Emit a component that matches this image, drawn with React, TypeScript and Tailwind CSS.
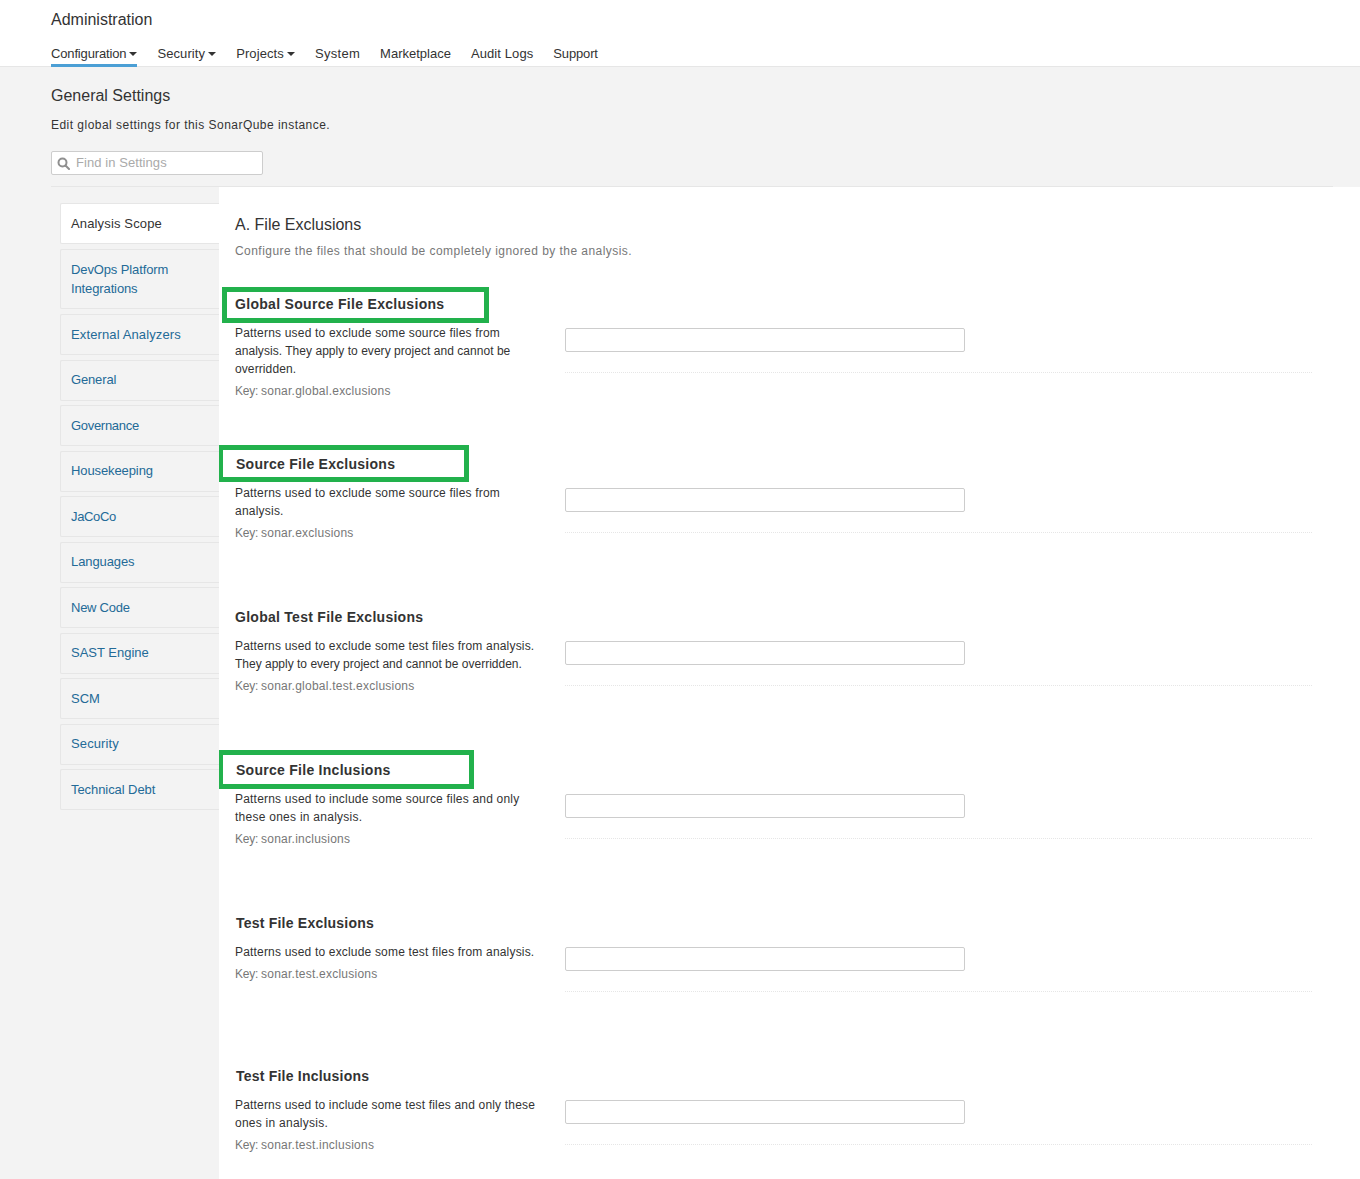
const sans = "font-['Liberation_Sans',Arial,sans-serif]";

const nav: { label: string; caret: boolean; cls: string }[] = [
  { label: "Security", caret: true, cls: "tracking-[0.1px]" },
  { label: "Projects", caret: true, cls: "tracking-[0.1px]" },
  { label: "System", caret: false, cls: "tracking-[0.3px]" },
  { label: "Marketplace", caret: false, cls: "" },
  { label: "Audit Logs", caret: false, cls: "tracking-[0.1px]" },
  { label: "Support", caret: false, cls: "tracking-[-0.15px]" },
];

const cats: [string, string][] = [
  ["External Analyzers", "tracking-[0.12px]"],
  ["General", "tracking-[-0.15px]"],
  ["Governance", "tracking-[-0.3px]"],
  ["Housekeeping", "tracking-[-0.1px]"],
  ["JaCoCo", "tracking-[-0.35px]"],
  ["Languages", "tracking-[-0.1px]"],
  ["New Code", "tracking-[-0.25px]"],
  ["SAST Engine", ""],
  ["SCM", ""],
  ["Security", "tracking-[0.12px]"],
  ["Technical Debt", "tracking-[-0.07px]"],
];

function Caret() {
  return <span className="ml-[3px] inline-block h-0 w-0 border-x-[4px] border-t-[4px] border-x-transparent border-t-[#333] align-[2px]" />;
}

type Line = [string, string];

function Setting({ title, titleCls, lines, k, h, box }: { title: string; titleCls: string; lines: Line[]; k: string; h: string; box?: string }) {
  return (
    <div className={`relative ${h} flex pl-[16px]`}>
      <div className="w-[330px] shrink-0">
        <div className={`relative z-10 h-[20px] text-[14px] font-bold leading-[20px] text-[#333] ${titleCls}`}>{title}</div>
        <div className="mt-[10px] text-[12px] leading-[18px] text-[#333]">
          {lines.map(([l, c]) => <div key={l} className={c}>{l}</div>)}
        </div>
        <div className="mt-[4px] text-[12px] leading-[18px] text-[#777]">
          <span className="tracking-[-0.26px]">Key: </span>
          <span className="tracking-[0.24px]">{k}</span>
        </div>
      </div>
      <div className="w-[747px]">
        <div className="mt-[34px] h-[24px] w-[400px] rounded-[2px] border border-[#cdcdcd] bg-white" />
        <div className="mt-[20px] border-b border-dotted border-[#e6e6e6]" />
      </div>
      {box && <div className={`absolute border-[5px] border-[#22b14c] ${box}`} />}
    </div>
  );
}

export default function App() {
  return (
    <div className={`${sans} min-h-[1179px] overflow-hidden bg-[#f3f3f3] text-[#333]`}>
      <header className="h-[67px] border-b border-[#e6e6e6] bg-white pl-[51px]">
        <div className="pt-[9px] text-[16px] leading-[22px] text-[#333]">Administration</div>
        <nav className="mt-[13px] flex gap-[20px] text-[13px] leading-[20px]">
          <div className="h-[23px] border-b-[3px] border-[#4b9fd5]"><span className="tracking-[-0.15px]">Configuration</span><Caret /></div>
          {nav.map((n) => <div key={n.label}><span className={n.cls}>{n.label}</span>{n.caret && <Caret />}</div>)}
        </nav>
      </header>
      <div className="pl-[51px]">
        <h1 className="pt-[17px] text-[16px] font-normal leading-[24px]">General Settings</h1>
        <p className="mt-[8px] text-[12px] leading-[18px] tracking-[0.47px]">Edit global settings for this SonarQube instance.</p>
        <div className="mt-[17px] flex h-[24px] w-[212px] items-center rounded-[2px] border border-[#cdcdcd] bg-white pl-[5px] text-[13px] tracking-[0.07px] text-[#aaa]">
          <svg width="13" height="13" viewBox="0 0 13 13" fill="none" stroke="#8f8f8f" strokeWidth="2"><circle cx="5.5" cy="5.5" r="4" /><path d="M8.5 8.5l3.5 3.5" strokeLinecap="round" /></svg>
          <span className="ml-[6px]">Find in Settings</span>
        </div>
        <div className="mt-[11px] mr-[27px] h-px bg-[#e6e6e6]" />
      </div>
      <div className="flex">
        <aside className="w-[219px] shrink-0 pl-[60px] pt-[16px] text-[13px]">
          <div className="mb-[5px] flex h-[41px] items-center rounded-l-[2px] border border-r-0 border-[#e6e6e6] bg-white pl-[10px] tracking-[0.15px] text-[#333]">Analysis Scope</div>
          <div className="mb-[5px] rounded-l-[2px] border border-r-0 border-[#e6e6e6] py-[10px] pl-[10px] leading-[19px] tracking-[-0.12px] text-[#236a97]">DevOps Platform<br />Integrations</div>
          {cats.map(([c, t]) => (
            <div key={c} className={`mb-[4.5px] flex h-[41px] items-center rounded-l-[2px] border border-r-0 border-[#e6e6e6] pl-[10px] text-[#236a97] ${t}`}>{c}</div>
          ))}
        </aside>
        <main className="h-[992px] flex-1 overflow-hidden bg-white">
          <div className="pl-[16px] pt-[27px]">
            <h2 className="text-[16px] font-normal leading-[22px]">A. File Exclusions</h2>
            <p className="mt-[6px] text-[12px] leading-[18px] tracking-[0.45px] text-[#777]">Configure the files that should be completely ignored by the analysis.</p>
          </div>
          <div className="mt-[34px]">
            <Setting h="h-[160px]" titleCls="tracking-[0.3px]" title="Global Source File Exclusions" lines={[["Patterns used to exclude some source files from", "tracking-[0.19px]"], ["analysis. They apply to every project and cannot be", "tracking-[0.04px]"], ["overridden.", "tracking-[0.1px]"]]} k="sonar.global.exclusions" box="left-[3px] top-[-7px] h-[36px] w-[267px]" />
            <Setting h="h-[153px]" titleCls="ml-[1px] tracking-[0.27px]" title="Source File Exclusions" lines={[["Patterns used to exclude some source files from", "tracking-[0.19px]"], ["analysis.", "tracking-[0.22px]"]]} k="sonar.exclusions" box="left-[-1px] top-[-9px] h-[37px] w-[251px]" />
            <Setting h="h-[153px]" titleCls="tracking-[0.27px]" title="Global Test File Exclusions" lines={[["Patterns used to exclude some test files from analysis.", "tracking-[0.18px]"], ["They apply to every project and cannot be overridden.", ""]]} k="sonar.global.test.exclusions" />
            <Setting h="h-[153px]" titleCls="ml-[1px] tracking-[0.27px]" title="Source File Inclusions" lines={[["Patterns used to include some source files and only", "tracking-[0.2px]"], ["these ones in analysis.", "tracking-[0.26px]"]]} k="sonar.inclusions" box="left-[-1px] top-[-10px] h-[39px] w-[256px]" />
            <Setting h="h-[153px]" titleCls="ml-[1px] tracking-[0.22px]" title="Test File Exclusions" lines={[["Patterns used to exclude some test files from analysis.", "tracking-[0.18px]"]]} k="sonar.test.exclusions" />
            <Setting h="h-[153px]" titleCls="ml-[1px] tracking-[0.22px]" title="Test File Inclusions" lines={[["Patterns used to include some test files and only these", "tracking-[0.18px]"], ["ones in analysis.", "tracking-[0.25px]"]]} k="sonar.test.inclusions" />
          </div>
        </main>
      </div>
    </div>
  );
}
